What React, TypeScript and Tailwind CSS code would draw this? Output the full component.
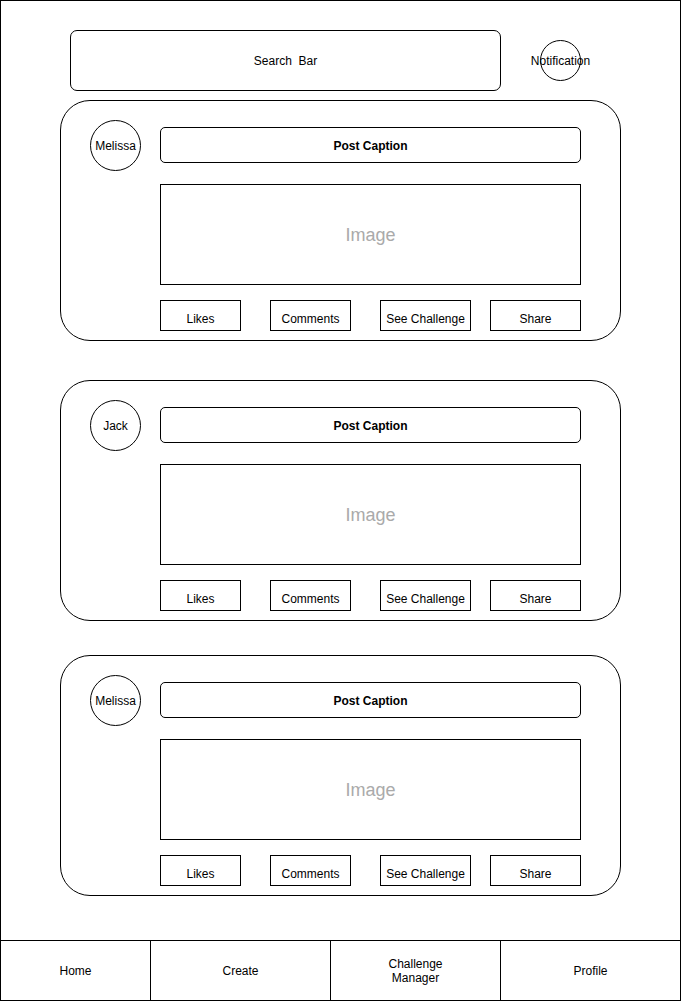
import React from 'react';

const font = { fontFamily: '"Liberation Sans", Arial, sans-serif' };

const PostCard: React.FC<{ user: string; className?: string }> = ({ user, className = '' }) => {
  return (
    <div
      className={`ml-[59px] w-[561px] h-[241px] border border-black rounded-[30px] flex pl-[29px] ${className}`}
    >
      {/* avatar */}
      <div className="mt-[19px] w-[51px] h-[51px] rounded-full border border-black flex items-center justify-center text-[12px] text-black shrink-0">
        {user}
      </div>

      <div className="ml-[19px] flex flex-col">
        <div className="mt-[26px] w-[421px] h-[36px] border border-black rounded-[5px] flex items-center justify-center pt-[2px] text-[12px] font-bold text-black">
          Post Caption
        </div>
        <div className="mt-[21px] w-[421px] h-[101px] border border-black flex items-center justify-center pt-[1px] text-[18px] text-[#aaaaaa]">
          Image
        </div>
        <div className="mt-[15px] flex">
          <div className="w-[81px] h-[31px] border border-black flex items-end justify-center pb-[2px] text-[12px]">Likes</div>
          <div className="ml-[29px] w-[81px] h-[31px] border border-black flex items-end justify-center pb-[2px] text-[12px]">Comments</div>
          <div className="ml-[29px] w-[91px] h-[31px] border border-black flex items-end justify-center pb-[2px] text-[12px]">See Challenge</div>
          <div className="ml-[19px] w-[91px] h-[31px] border border-black flex items-end justify-center pb-[2px] text-[12px]">Share</div>
        </div>
      </div>
    </div>
  );
};

const App: React.FC = () => {
  return (
    <div className="bg-white w-[682px] h-[1002px]" style={font}>
      <div className="w-[681px] h-[1001px] border border-black flex flex-col text-black">
        {/* header */}
        <div className="mt-[29px] flex items-center">
          <div className="ml-[69px] w-[431px] h-[61px] border border-black rounded-[7px] flex items-center justify-center text-[12px] whitespace-pre">
            Search  Bar
          </div>
          <div className="ml-[39px] w-[41px] h-[41px] rounded-full border border-black flex items-center justify-center text-[12px] overflow-visible whitespace-nowrap">
            Notification
          </div>
        </div>

        <PostCard user="Melissa" className="mt-[9px]" />
        <PostCard user="Jack" className="mt-[39px]" />
        <PostCard user="Melissa" className="mt-[34px]" />

        {/* bottom nav */}
        <div className="mt-auto h-[60px] border-t border-black flex text-[12px]">
          <div className="w-[150px] border-r border-black flex items-center justify-center">Home</div>
          <div className="w-[180px] border-r border-black flex items-center justify-center">Create</div>
          <div className="w-[170px] border-r border-black flex items-center justify-center text-center leading-[14px]">
            Challenge
            <br />
            Manager
          </div>
          <div className="flex-1 flex items-center justify-center">Profile</div>
        </div>
      </div>
    </div>
  );
};

export default App;
